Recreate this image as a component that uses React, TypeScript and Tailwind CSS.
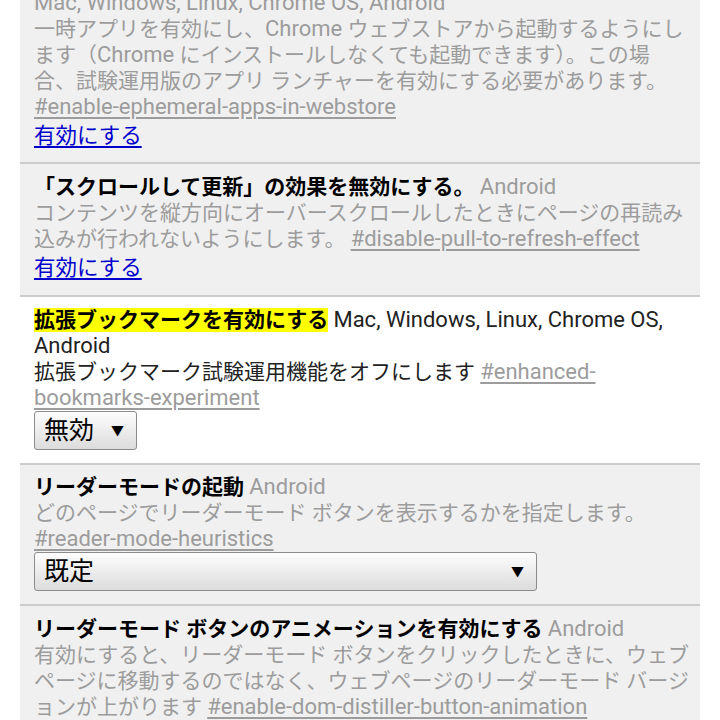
import clsx from "clsx";
import type { ReactNode } from "react";

// Latin runs render a touch larger than the CJK text in the reference
function L({ children }: { children: ReactNode }) {
  return <span className="text-[22px]">{children}</span>;
}

function Section({ enabled, className, children }: { enabled?: boolean; className?: string; children: ReactNode }) {
  return (
    <div
      className={clsx(
        "border-b-2 border-[#cccccc] pl-[14px] pr-[6px] pb-[13px]",
        enabled ? "bg-white" : "bg-[#f0f0f0]",
        className
      )}
    >
      {children}
    </div>
  );
}

function Tag({ children }: { children: ReactNode }) {
  return (
    <span className="text-[22px] text-[#9c9c9c] underline decoration-[#9c9c9c] underline-offset-[3px]">{children}</span>
  );
}

function EnableLink() {
  return <div className="mt-[3px] text-[21.5px] text-[#0000cc] underline underline-offset-[3px]">有効にする</div>;
}

function FakeSelect({ value, wide }: { value: string; wide?: boolean }) {
  return (
    <div
      className={clsx(
        "flex h-[39px] items-center rounded-[3px] border border-[#8c8c8c] bg-gradient-to-b from-[#fdfdfd] to-[#dcdcdc] pl-[9px] text-[25px] leading-none text-black",
        wide ? "w-[503px] justify-between pr-[12px]" : "w-[103px] gap-[17px]"
      )}
    >
      <span>{value}</span>
      <span className="text-[13px]">▼</span>
    </div>
  );
}

export default function App() {
  return (
    <div className="h-[720px] overflow-hidden bg-white font-['Roboto','Noto_Sans_CJK_JP',sans-serif] text-[21px] leading-[26px]">
      <div className="mx-[20px] -mt-[10px]">
        {/* Ephemeral apps */}
        <Section className="pb-[12px]">
          <div className="text-[#9c9c9c]">
            <L>Mac, Windows, Linux, Chrome OS, Android</L>
          </div>
          <div className="text-[#9c9c9c]">
            一時アプリを有効にし、<L>Chrome</L> ウェブストアから起動するようにし
            <br />
            ます（<L>Chrome</L> にインストールしなくても起動できます）。この場
            <br />
            合、試験運用版のアプリ ランチャーを有効にする必要があります。
            <br />
            <Tag>#enable-ephemeral-apps-in-webstore</Tag>
          </div>
          <EnableLink />
        </Section>

        {/* Pull to refresh */}
        <Section className="pt-[10px] pb-[14px]">
          <div>
            <span className="font-bold text-black">「スクロールして更新」の効果を無効にする。</span>{" "}
            <span className="text-[#9c9c9c]">
              <L>Android</L>
            </span>
          </div>
          <div className="text-[#9c9c9c]">
            コンテンツを縦方向にオーバースクロールしたときにページの再読み
            <br />
            込みが行われないようにします。 <Tag>#disable-pull-to-refresh-effect</Tag>
          </div>
          <EnableLink />
        </Section>

        {/* Enhanced bookmarks (enabled) */}
        <Section enabled className="pt-[10px]">
          <div className="text-[#222222]">
            <span className="bg-[#ffff00] font-bold text-black">拡張ブックマークを有効にする</span>{" "}
            <L>Mac, Windows, Linux, Chrome OS,</L>
            <br />
            <L>Android</L>
          </div>
          <div className="text-[#222222]">
            拡張ブックマーク試験運用機能をオフにします{" "}
            <Tag>
              #enhanced-
              <br />
              bookmarks-experiment
            </Tag>
          </div>
          <FakeSelect value="無効" />
        </Section>

        {/* Reader mode heuristics */}
        <Section className="pt-[9px] pb-[12px]">
          <div>
            <span className="font-bold text-black">リーダーモードの起動</span>{" "}
            <span className="text-[#9c9c9c]">
              <L>Android</L>
            </span>
          </div>
          <div className="text-[#9c9c9c]">
            どのページでリーダーモード ボタンを表示するかを指定します。
            <br />
            <Tag>#reader-mode-heuristics</Tag>
          </div>
          <FakeSelect value="既定" wide />
        </Section>

        {/* Reader mode button animation */}
        <Section className="pt-[10px]">
          <div>
            <span className="font-bold text-black">リーダーモード ボタンのアニメーションを有効にする</span>{" "}
            <span className="text-[#9c9c9c]">
              <L>Android</L>
            </span>
          </div>
          <div className="text-[#9c9c9c]">
            有効にすると、リーダーモード ボタンをクリックしたときに、ウェブ
            <br />
            ページに移動するのではなく、ウェブページのリーダーモード バージ
            <br />
            ョンが上がります <Tag>#enable-dom-distiller-button-animation</Tag>
          </div>
          <EnableLink />
        </Section>
      </div>
    </div>
  );
}
